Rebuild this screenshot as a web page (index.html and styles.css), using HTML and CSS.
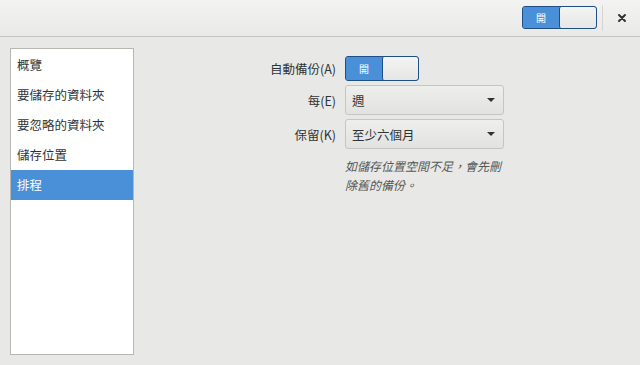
FILE: index.html
```html
<!DOCTYPE html>
<html lang="zh-Hant">
<head>
<meta charset="utf-8">
<link rel="stylesheet" href="styles.css">
</head>
<body>
<div class="window">
  <header class="headerbar">
    <div class="switch switch-header">
      <span class="switch-on">開</span>
      <span class="switch-knob"></span>
    </div>
    <span class="sep"></span>
    <button class="close" aria-label="close">
      <svg width="10" height="10" viewBox="0 0 10 10"><path d="M2 2 L8 8 M8 2 L2 8" stroke="#2e3436" stroke-width="2" stroke-linecap="round"/></svg>
    </button>
  </header>
  <main class="main">
    <nav class="sidebar">
      <div class="row">概覽</div>
      <div class="row">要儲存的資料夾</div>
      <div class="row">要忽略的資料夾</div>
      <div class="row">儲存位置</div>
      <div class="row selected">排程</div>
    </nav>
    <section class="content">
      <div class="form">
        <label class="label">自動備份(A)</label>
        <div class="switch">
          <span class="switch-on">開</span>
          <span class="switch-knob"></span>
        </div>
        <label class="label">每(E)</label>
        <div class="combo"><span>週</span><span class="arrow"></span></div>
        <label class="label">保留(K)</label>
        <div class="combo"><span>至少六個月</span><span class="arrow"></span></div>
        <span></span>
        <p class="hint">如儲存位置空間不足，會先刪除舊的備份。</p>
      </div>
    </section>
  </main>
</div>
</body>
</html>
```
FILE: styles.css
```css
* { box-sizing: border-box; }
html, body { margin: 0; padding: 0; }
body {
  width: 640px;
  height: 365px;
  overflow: hidden;
  background: #e8e8e7;
  font-family: "Noto Sans CJK TC", "Noto Sans", sans-serif;
  font-size: 12.5px;
  color: #2e3436;
}
.window { display: flex; flex-direction: column; height: 365px; }
.headerbar {
  height: 37px;
  flex: none;
  display: flex;
  align-items: center;
  justify-content: flex-end;
  background: linear-gradient(#f3f3f2, #e9e9e8);
  border-bottom: 1px solid #c6c3bf;
}
.sep { width: 1px; height: 26px; background: #d6d4d0; margin-left: 5px; }
.close {
  width: 37px; height: 36px;
  border: none; background: transparent; padding: 0;
  display: flex; align-items: center; justify-content: center;
}
.switch {
  display: flex;
  width: 74px;
  height: 25px;
  border: 1px solid #1f4f86;
  border-radius: 3px;
  background: #4a90d9;
  overflow: hidden;
}
.switch-header { width: 75px; height: 23px; margin-bottom: 1px; }
.switch-on {
  width: 36px;
  display: flex; align-items: center; justify-content: center;
  color: #fff;
  font-size: 10px;
  background: #4a90d9;
}
.switch-knob {
  flex: 1;
  background: linear-gradient(#f4f4f3, #e6e6e4);
  border-left: 1px solid #1f4f86;
  border-radius: 2px;
}
.main { flex: 1; display: flex; padding: 11px 0 10px 10px; }
.sidebar {
  width: 124px;
  background: #fff;
  border: 1px solid #b9b6b2;
  padding-top: 1px;
  display: flex; flex-direction: column;
}
.row {
  height: 30px;
  line-height: 30px;
  padding-left: 6px;
  white-space: nowrap;
}
.row.selected { background: #4a90d9; color: #fff; }
.content { flex: 1; display: flex; justify-content: center; padding-top: 8px; }
.form {
  display: grid;
  grid-template-columns: auto 159px;
  column-gap: 9px;
  row-gap: 4px;
  align-content: start;
  align-items: center;
}
.label { text-align: right; white-space: nowrap; }
.combo {
  height: 30px;
  border: 1px solid #c8c5c1;
  border-radius: 3px;
  background: linear-gradient(#eeeeec, #e2e2e0);
  display: flex; align-items: center; justify-content: space-between;
  padding: 0 8px 0 6px;
}
.combo + .label { margin-top: 1px; }
.arrow {
  width: 0; height: 0;
  border-left: 4px solid transparent;
  border-right: 4px solid transparent;
  border-top: 4px solid #2e3436;
}
.hint {
  margin: 3px 0 0 0;
  font-size: 12px;
  font-style: italic;
  color: #555753;
  line-height: 19px;
}
```
